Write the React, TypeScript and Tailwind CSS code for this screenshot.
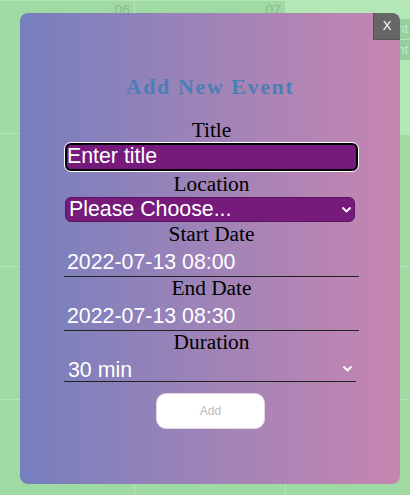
import { type ReactNode } from 'react'

function Chevron({ className = '' }: { className?: string }) {
  return (
    <svg width="9" height="6" viewBox="0 0 9 6" className={`pointer-events-none absolute right-[4px] ${className}`}>
      <path d="M1.2 1.2 L4.5 4.4 L7.8 1.2" fill="none" stroke="white" strokeWidth="2" strokeLinecap="square" strokeLinejoin="miter" />
    </svg>
  )
}

function Label({ children, className = '' }: { children: ReactNode; className?: string }) {
  return (
    <label className={`block h-[22px] leading-[22px] text-center text-[21.33px] text-black font-['Liberation_Serif','Times_New_Roman',serif] ${className}`}>
      {children}
    </label>
  )
}

function CalendarBackdrop() {
  return (
    <div className="flex h-full border-t border-[#b6e4b8]">
      <div className="w-[135px] shrink-0 border-r border-[#b6e4b8]">
        <div className="h-[133px] border-b border-[#b6e4b8] pr-[4px] pt-[1px] text-right text-[14px] leading-[16px] text-[#8dbb93]">06</div>
        <div className="h-[133px] border-b border-[#b6e4b8]" />
        <div className="h-[133px] border-b border-[#b6e4b8]" />
      </div>
      <div className="w-[151px] shrink-0 border-r border-[#b6e4b8]">
        <div className="h-[133px] border-b border-[#b6e4b8] pr-[4px] pt-[1px] text-right text-[14px] leading-[16px] text-[#8dbb93]">07</div>
        <div className="h-[133px] border-b border-[#b6e4b8]" />
        <div className="h-[133px] border-b border-[#b6e4b8]" />
      </div>
      <div className="flex-1">
        <div className="h-[133px] bg-[#b4e7b6] pt-[18px] flex flex-col gap-[1px]">
          <div className="h-[20px] bg-[#93cf9f] pr-[2px] text-right text-[13px] leading-[20px] text-[#c2ecc8]">Event</div>
          <div className="h-[20px] bg-[#93cf9f] pr-[2px] text-right text-[13px] leading-[20px] text-[#c2ecc8]">Event</div>
        </div>
        <div className="h-[133px] border-t border-b border-[#b6e4b8]" />
        <div className="h-[133px] border-b border-[#b6e4b8]" />
      </div>
    </div>
  )
}

export default function App() {
  return (
    <div className="relative w-[410px] h-[495px] overflow-hidden bg-[#9fdaa3] font-['Liberation_Sans',Arial,sans-serif]">
      <CalendarBackdrop />

      <div className="absolute left-[20px] top-[13px] w-[380px] h-[471px] rounded-[8px] bg-gradient-to-r from-[#757fbe] to-[#c685b0]">
        <button className="absolute top-0 right-0 w-[27px] h-[27px] rounded-tr-[8px] bg-[#666666] border-l border-b border-[#555555] text-white text-[13px] leading-[26px] text-center">
          X
        </button>

        <h2 className="mt-[61px] h-[26px] leading-[26px] text-center text-[22px] font-bold tracking-[1.6px] text-[#4a7fb5] font-['Liberation_Serif','Times_New_Roman',serif]">
          Add New Event
        </h2>

        <form className="mt-[19px] ml-[44px] w-[295px] flex flex-col">
          <Label>Title</Label>
          <input
            placeholder="Enter title"
            className="mt-[1px] h-[30px] w-[295px] rounded-[7px] border border-white bg-[#761b7b] pl-[2px] text-[21.33px] text-white placeholder:text-white shadow-[inset_0_0_0_2px_#000] outline-none"
          />

          <Label className="mt-[1px]">Location</Label>
          <div className="relative mt-[2px] ml-[1px] w-[290px] flex items-center">
            <select className="h-[25px] w-full appearance-none rounded-[6px] border border-[#5a1460] bg-[#761b7b] pl-[3px] text-[21.33px] leading-[23px] text-white outline-none">
              <option>Please Choose...</option>
            </select>
            <Chevron />
          </div>

          <Label className="mt-[1px]">Start Date</Label>
          <input
            defaultValue="2022-07-13 08:00"
            className="h-[32px] w-[295px] border-b border-[#222] bg-transparent pl-[3px] pt-[3px] text-[21.33px] text-white outline-none"
          />

          <Label>End Date</Label>
          <input
            defaultValue="2022-07-13 08:30"
            className="h-[32px] w-[295px] border-b border-[#222] bg-transparent pl-[3px] pt-[3px] text-[21.33px] text-white outline-none"
          />

          <Label>Duration</Label>
          <div className="relative w-[292px] flex items-center">
            <select className="h-[29px] w-full appearance-none border-b border-[#222] bg-transparent pl-[4px] pt-[2px] text-[21.33px] text-white outline-none">
              <option>30 min</option>
            </select>
            <Chevron className="mt-[3px]" />
          </div>

          <button
            type="button"
            className="mt-[11px] ml-[92px] h-[36px] w-[109px] rounded-[10px] border border-[#e3d6e6] bg-white text-[12px] text-[#bdbdbd]"
          >
            Add
          </button>
        </form>
      </div>
    </div>
  )
}
